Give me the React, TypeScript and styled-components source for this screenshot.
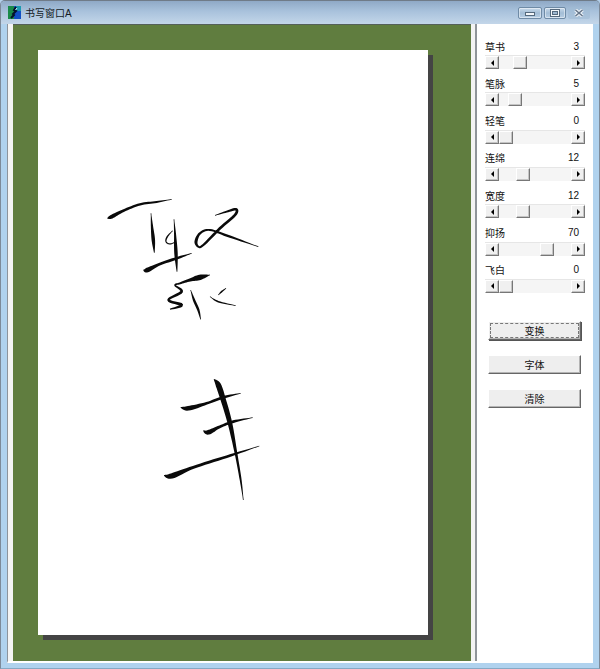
import styled, { createGlobalStyle } from 'styled-components';

const GlobalStyle = createGlobalStyle`
  html, body {
    margin: 0;
    padding: 0;
    background: #b4d0ec;
  }
  body {
    font-family: "Liberation Sans", "Noto Sans CJK SC", sans-serif;
  }
`;

const Window = styled.div`
  width: 600px;
  height: 669px;
  box-sizing: border-box;
  display: flex;
  flex-direction: column;
  background: #b0d2ee;
  border: 1px solid #7d8a99;
  border-top-color: #6f7b88;
  border-bottom-color: #86a9c4;
  border-radius: 5px 5px 0 0;
  overflow: hidden;
`;

const TitleBar = styled.div`
  height: 23px;
  flex: none;
  display: flex;
  align-items: center;
  padding: 0 9px 0 7px;
  background: linear-gradient(#8fa9c6, #a9c2dc 45%, #c3d6e9);
`;

const Title = styled.span`
  margin-left: 4px;
  font-size: 10px;
  color: #141c26;
`;

const WindowControls = styled.div`
  margin-left: auto;
  display: flex;
  gap: 2px;
`;

const ControlButton = styled.div<{ $width: number; $plain?: boolean }>`
  width: ${props => props.$width}px;
  height: 12px;
  box-sizing: border-box;
  display: flex;
  align-items: center;
  justify-content: center;
  border: 1px solid ${props => (props.$plain ? 'transparent' : '#6f8ba6')};
  border-radius: 2px;
  background: ${props => (props.$plain ? 'rgba(160, 186, 212, 0.6)' : 'linear-gradient(#c9dbeb, #a3bdd6 50%, #b8cfe4)')};
  box-shadow: ${props => (props.$plain ? 'none' : 'inset 0 0 0 1px rgba(255, 255, 255, 0.45)')};
`;

const Body = styled.div`
  flex: 1;
  display: flex;
  margin: 0 6px 5px 6px;
  min-height: 0;
  border-left: 1px solid #8d949c;
  border-bottom: 2px solid #fff;
  background: #fff;
`;

const LeftEdge = styled.div`
  width: 5px;
  flex: none;
  background: #f4f4f4;
`;

const CanvasArea = styled.div`
  width: 458px;
  flex: none;
  box-sizing: border-box;
  padding: 25px 0 0 25px;
  background: #607d3f;
  border-top: 1px solid #55605a;
`;

const Sheet = styled.div`
  width: 390px;
  height: 585px;
  background: #fff;
  box-shadow: 5px 5px 0 #444;
`;

const InkSvg = styled.svg`
  display: block;
`;

const Splitter = styled.div`
  width: 6px;
  flex: none;
  box-sizing: border-box;
  background: #f3f3f3;
  border-right: 2px solid #8f9499;
`;

const SidePanel = styled.div`
  flex: 1;
  box-sizing: border-box;
  display: flex;
  flex-direction: column;
  padding: 16px 0 0 8px;
  background: #fff;
`;

const SliderGroup = styled.div`
  display: flex;
  flex-direction: column;
  gap: 8.33px;
`;

const SliderRow = styled.div`
  display: flex;
  flex-direction: column;
  gap: 3px;
`;

const SliderHead = styled.div`
  width: 94px;
  height: 12px;
  display: flex;
  justify-content: space-between;
  align-items: center;
  font-size: 10px;
  color: #111;
`;

const Track = styled.div`
  width: 100px;
  height: 14px;
  display: flex;
  align-items: stretch;
  background: #f5f5f5;
  border-top: 1px solid #e6e6e6;
  box-sizing: border-box;
`;

const ScrollButton = styled.div`
  flex: none;
  width: 14px;
  box-sizing: border-box;
  display: flex;
  align-items: center;
  justify-content: center;
  background: #f0f0f0;
  border: 1px solid #fff;
  border-right-color: #777;
  border-bottom-color: #777;
  box-shadow: inset -1px -1px 0 #c4c4c4;
`;

const ArrowLeft = styled.span`
  width: 0;
  height: 0;
  border-style: solid;
  border-width: 3.5px 3.5px 3.5px 0;
  border-color: transparent #000 transparent transparent;
`;

const ArrowRight = styled.span`
  width: 0;
  height: 0;
  border-style: solid;
  border-width: 3.5px 0 3.5px 3.5px;
  border-color: transparent transparent transparent #000;
`;

const TrackSpace = styled.div`
  flex: 1;
  display: flex;
  align-items: stretch;
`;

const Thumb = styled.div<{ $offset: number }>`
  width: 14px;
  margin-left: ${props => props.$offset}px;
  box-sizing: border-box;
  background: #f0f0f0;
  border: 1px solid #fff;
  border-right-color: #777;
  border-bottom-color: #777;
  box-shadow: inset -1px -1px 0 #c4c4c4;
`;

const ButtonGroup = styled.div`
  display: flex;
  flex-direction: column;
  gap: 15px;
  margin: 28px 0 0 3px;
`;

const ActionButton = styled.button<{ $focused?: boolean }>`
  width: 93px;
  height: 19px;
  padding: 0;
  box-sizing: border-box;
  font-family: inherit;
  font-size: 10px;
  color: #111;
  background: #eeeeee;
  border: 1px solid #fff;
  border-right-color: #666;
  border-bottom-color: #666;
  outline: ${props => (props.$focused ? '1px dashed #777' : 'none')};
  outline-offset: -3px;
  box-shadow: inset -1px -1px 0 #b4b4b4${props => (props.$focused ? ', 1px 1px 0 #555' : '')};
`;

type BrushPoint = [number, number, number];

const WIDTH_SCALE = 2.3;
const MIN_WIDTH = 2.2;

// turns a centre line with widths into a filled, smoothed brush outline
const brushPath = (points: BrushPoint[]) => {
  const dense: BrushPoint[] = [];
  for (let i = 0; i < points.length - 1; i++) {
    const p0 = points[Math.max(i - 1, 0)];
    const p1 = points[i];
    const p2 = points[i + 1];
    const p3 = points[Math.min(i + 2, points.length - 1)];
    for (let s = 0; s < 8; s++) {
      const t = s / 8;
      const at = (k: number) =>
        0.5 *
        (2 * p1[k] +
          (p2[k] - p0[k]) * t +
          (2 * p0[k] - 5 * p1[k] + 4 * p2[k] - p3[k]) * t * t +
          (3 * p1[k] - p0[k] - 3 * p2[k] + p3[k]) * t * t * t);
      dense.push([at(0), at(1), at(2)]);
    }
  }
  dense.push(points[points.length - 1]);
  const left: string[] = [];
  const right: string[] = [];
  dense.forEach((p, i) => {
    const a = dense[Math.max(i - 1, 0)];
    const b = dense[Math.min(i + 1, dense.length - 1)];
    const dx = b[0] - a[0];
    const dy = b[1] - a[1];
    const len = Math.hypot(dx, dy) || 1;
    const half = Math.max(p[2] * WIDTH_SCALE, MIN_WIDTH) / 2;
    const nx = (-dy / len) * half;
    const ny = (dx / len) * half;
    left.push(`${(p[0] + nx).toFixed(1)} ${(p[1] + ny).toFixed(1)}`);
    right.unshift(`${(p[0] - nx).toFixed(1)} ${(p[1] - ny).toFixed(1)}`);
  });
  return `M${left.join('L')}L${right.join('L')}Z`;
};

const upperGlyph: BrushPoint[][] = [
  [[52, 85, 1], [65, 80, 5], [100, 62, 3.5], [150, 43, 3], [200, 36, 2.5], [245, 28, 0.5]],
  [[183, 70, 0.5], [186, 110, 3], [190, 150, 4.5], [193, 188, 1]],
  [[252, 88, 0.5], [255, 130, 2.5], [258, 190, 4.5], [261, 245, 1]],
  [[248, 122, 0.5], [232, 140, 2], [228, 155, 1.5], [240, 162, 1.5], [258, 155, 1]],
  [[160, 240, 1], [172, 240, 6], [210, 222, 3.5], [260, 205, 3.5], [305, 190, 0.5]],
  [[375, 76, 1], [410, 65, 2.5], [438, 58, 3.5], [435, 75, 3.5], [390, 115, 3.5], [340, 165, 3], [325, 170, 2.5], [318, 155, 4], [330, 130, 3], [360, 120, 2.5], [420, 140, 3], [505, 170, 0.5]],
  [[360, 255, 0.5], [330, 262, 7], [300, 270, 4], [270, 280, 2.5], [255, 286, 2], [275, 305, 3.5], [235, 330, 3], [275, 345, 4], [240, 358, 1.5]],
  [[302, 300, 0.5], [312, 330, 3], [325, 360, 3], [332, 388, 0.8]],
  [[408, 295, 0.5], [395, 305, 2], [385, 315, 0.5]],
  [[360, 320, 0.5], [385, 335, 2], [437, 347, 0.5]],
];

const lowerGlyph: BrushPoint[][] = [
  [[192, 28, 1], [205, 45, 7], [220, 90, 7], [240, 160, 6], [258, 250, 3.5], [272, 330, 2.5], [280, 390, 0.5]],
  [[92, 112, 1], [115, 115, 6], [170, 100, 3.5], [220, 82, 3.5], [272, 70, 0.5]],
  [[160, 182, 1], [175, 187, 6], [210, 170, 3.5], [250, 155, 3.5], [308, 143, 0.5]],
  [[42, 316, 1], [65, 318, 7], [130, 292, 4], [230, 260, 3.5], [328, 228, 0.5]],
];

// [label, value, thumb offset from the left arrow]
const sliders: [string, number, number][] = [
  ['草书', 3, 14],
  ['笔脉', 5, 9],
  ['轻笔', 0, 0],
  ['连绵', 12, 17],
  ['宽度', 12, 17],
  ['抑扬', 70, 41],
  ['飞白', 0, 0],
];

const AppIcon = () => (
  <svg width="13" height="13" viewBox="0 0 13 13">
    <rect width="13" height="13" fill="#1250c4" />
    <rect x="0" y="0" width="6" height="13" fill="#1a8a4a" />
    <rect x="8" y="0" width="5" height="5" fill="#1c9ab0" />
    <path d="M8 1L6 4L8 5L5 8L6 9L3 12" fill="none" stroke="#06122a" strokeWidth="2" />
    <path d="M9 2L7.5 4" stroke="#c8f0ff" strokeWidth="1" />
  </svg>
);

const App = () => {
  return (
    <>
      <GlobalStyle />
      <Window>
        <TitleBar>
          <AppIcon />
          <Title>书写窗口A</Title>
          <WindowControls>
            <ControlButton $width={24}>
              <svg width="10" height="6" viewBox="0 0 10 6">
                <rect x="0.5" y="2.5" width="9" height="3" fill="#f4f7fa" stroke="#55697d" />
              </svg>
            </ControlButton>
            <ControlButton $width={22}>
              <svg width="10" height="8" viewBox="0 0 10 8">
                <rect x="0.5" y="0.5" width="9" height="7" fill="#f4f7fa" stroke="#55697d" />
                <rect x="2.5" y="2.5" width="5" height="3" fill="#9db7d0" stroke="#55697d" />
              </svg>
            </ControlButton>
            <ControlButton $width={22} $plain>
              <svg width="10" height="8" viewBox="0 0 10 8">
                <path d="M1.5 1L8.5 7M8.5 1L1.5 7" stroke="#eef3f8" strokeWidth="3.6" />
                <path d="M1.5 1L8.5 7M8.5 1L1.5 7" stroke="#66768a" strokeWidth="1.6" />
              </svg>
            </ControlButton>
          </WindowControls>
        </TitleBar>
        <Body>
          <LeftEdge />
          <CanvasArea>
            <Sheet>
              <InkSvg width="390" height="585" viewBox="38 50 390 585">
                <g transform="translate(90 190) scale(0.3333)">
                  {upperGlyph.map((stroke, i) => (
                    <path key={i} d={brushPath(stroke)} fill="#0a0a0a" />
                  ))}
                </g>
                <g transform="translate(150 370) scale(0.3333)">
                  {lowerGlyph.map((stroke, i) => (
                    <path key={i} d={brushPath(stroke)} fill="#0a0a0a" />
                  ))}
                </g>
              </InkSvg>
            </Sheet>
          </CanvasArea>
          <Splitter />
          <SidePanel>
            <SliderGroup>
              {sliders.map(([label, value, offset]) => (
                <SliderRow key={label}>
                  <SliderHead>
                    <span>{label}</span>
                    <span>{value}</span>
                  </SliderHead>
                  <Track>
                    <ScrollButton>
                      <ArrowLeft />
                    </ScrollButton>
                    <TrackSpace>
                      <Thumb $offset={offset} />
                    </TrackSpace>
                    <ScrollButton>
                      <ArrowRight />
                    </ScrollButton>
                  </Track>
                </SliderRow>
              ))}
            </SliderGroup>
            <ButtonGroup>
              <ActionButton $focused>变换</ActionButton>
              <ActionButton>字体</ActionButton>
              <ActionButton>清除</ActionButton>
            </ButtonGroup>
          </SidePanel>
        </Body>
      </Window>
    </>
  );
};

export default App;
